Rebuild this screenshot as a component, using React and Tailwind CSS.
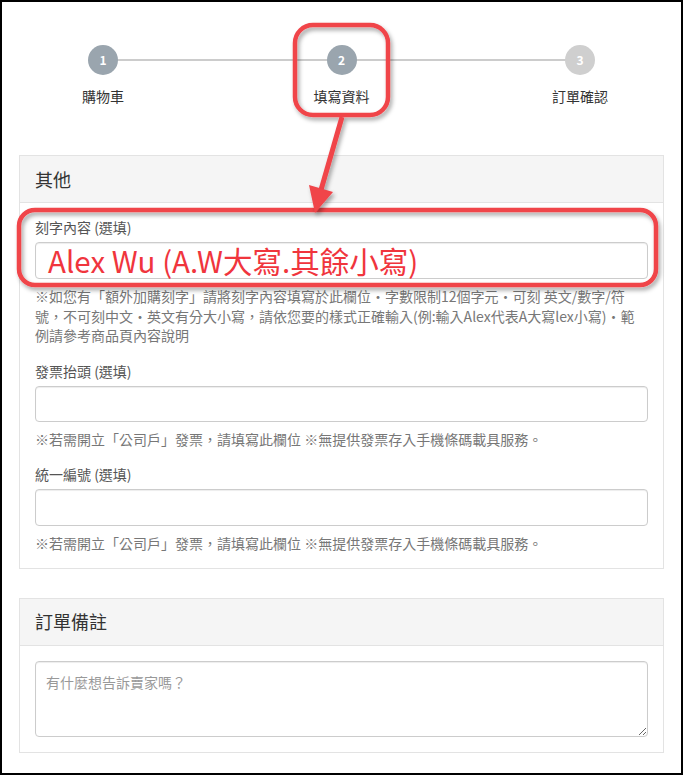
const font = "font-['Noto_Sans_CJK_TC','Noto_Sans',sans-serif]";

const steps = [
  { n: 1, label: '購物車', done: true },
  { n: 2, label: '填寫資料', done: true },
  { n: 3, label: '訂單確認', done: false },
];

const Stepper = () => (
  <div className="relative mx-[61px] pt-[43px] flex justify-between">
    {/* 連接線 */}
    <div className="absolute left-10 right-10 top-[57px] h-[2px] bg-[#cccccc]" />
    {steps.map((s) => (
      <div key={s.n} className="relative w-20 flex flex-col items-center">
        <div
          className={
            s.done
              ? 'w-[30px] h-[30px] rounded-full bg-[#9aa5ae] text-white text-xs font-bold flex items-center justify-center'
              : 'w-[30px] h-[30px] rounded-full bg-[#cfcfcf] text-white text-xs font-bold flex items-center justify-center'
          }
        >
          {s.n}
        </div>
        <div className="mt-[11px] text-sm leading-5 text-[#333] whitespace-nowrap">{s.label}</div>
      </div>
    ))}
  </div>
);

const Panel = ({ title, className, children }) => (
  <div className={`border border-[#e3e3e3] bg-white ${className}`}>
    <div className="h-[47px] bg-[#f5f5f5] border-b border-[#e3e3e3] px-[15px] flex items-center text-[18px] text-[#333]">
      {title}
    </div>
    {children}
  </div>
);

const Help = ({ children, className = '' }) => (
  <p className={`text-sm text-[#777] ${className}`}>{children}</p>
);

const Label = ({ children }) => (
  <div className="text-sm leading-5 text-[#555] mb-[5px]">{children}</div>
);

const inputCls =
  'block w-full border border-[#cccccc] rounded-[4px] shadow-[inset_0_1px_1px_rgba(0,0,0,0.075)] bg-white';

const Annotations = () => (
  <svg
    className="absolute left-[-2px] top-[-2px] w-[683px] h-[775px] pointer-events-none"
    viewBox="0 0 683 775"
  >
    <defs>
      <filter id="sh" x="-20%" y="-20%" width="140%" height="140%">
        <feDropShadow dx="2" dy="3" stdDeviation="2" floodColor="#000" floodOpacity="0.35" />
      </filter>
    </defs>
    <g filter="url(#sh)" stroke="#f0444a" fill="none" strokeWidth="4.5">
      <rect x="295" y="25" width="93" height="90" rx="18" />
      <line x1="342" y1="117" x2="321" y2="190" strokeWidth="5" />
      <rect x="19" y="210" width="637" height="75" rx="16" />
    </g>
    <polygon points="315,213 333,192 309,185" fill="#f0444a" filter="url(#sh)" />
  </svg>
);

export default function App() {
  return (
    <div className={`relative w-[683px] h-[775px] border-2 border-black bg-white overflow-hidden ${font}`}>
      <Stepper />

      <div className="px-[17px] mt-[49px]">
        <Panel title="其他">
          <div className="px-[15px] pt-[14px] pb-[15px]">
            <Label>刻字內容 (選填)</Label>
            <div className={`${inputCls} h-[37px] px-[12px] flex items-center`}>
              <span className="text-[29.5px] leading-none font-normal text-[#f0353d] whitespace-nowrap">
                Alex Wu (A.W大寫.其餘小寫)
              </span>
            </div>
            <Help className="mt-[8px] leading-[19.5px]">
              ※如您有「額外加購刻字」請將刻字內容填寫於此欄位・字數限制12個字元・可刻 英文/數字/符號，不可刻中文・英文有分大小寫，請依您要的樣式正確輸入(例:輸入Alex代表A大寫lex小寫)・範例請參考商品頁內容說明
            </Help>

            <div className="mt-[15px]">
              <Label>發票抬頭 (選填)</Label>
              <input className={`${inputCls} h-[36px] px-3 text-sm`} />
              <Help className="mt-[7px] leading-5">
                ※若需開立「公司戶」發票，請填寫此欄位 ※無提供發票存入手機條碼載具服務。
              </Help>
            </div>

            <div className="mt-[15px]">
              <Label>統一編號 (選填)</Label>
              <input className={`${inputCls} h-[37px] px-3 text-sm`} />
              <Help className="mt-[7px] leading-5">
                ※若需開立「公司戶」發票，請填寫此欄位 ※無提供發票存入手機條碼載具服務。
              </Help>
            </div>
          </div>
        </Panel>

        <Panel title="訂單備註" className="mt-[29px]">
          <div className="p-[15px]">
            <textarea
              className={`${inputCls} h-[76px] px-[10px] py-[10px] text-sm leading-5 text-[#555] placeholder:text-[#999] ${font}`}
              placeholder="有什麼想告訴賣家嗎？"
            />
          </div>
        </Panel>
      </div>

      <Annotations />
    </div>
  );
}
